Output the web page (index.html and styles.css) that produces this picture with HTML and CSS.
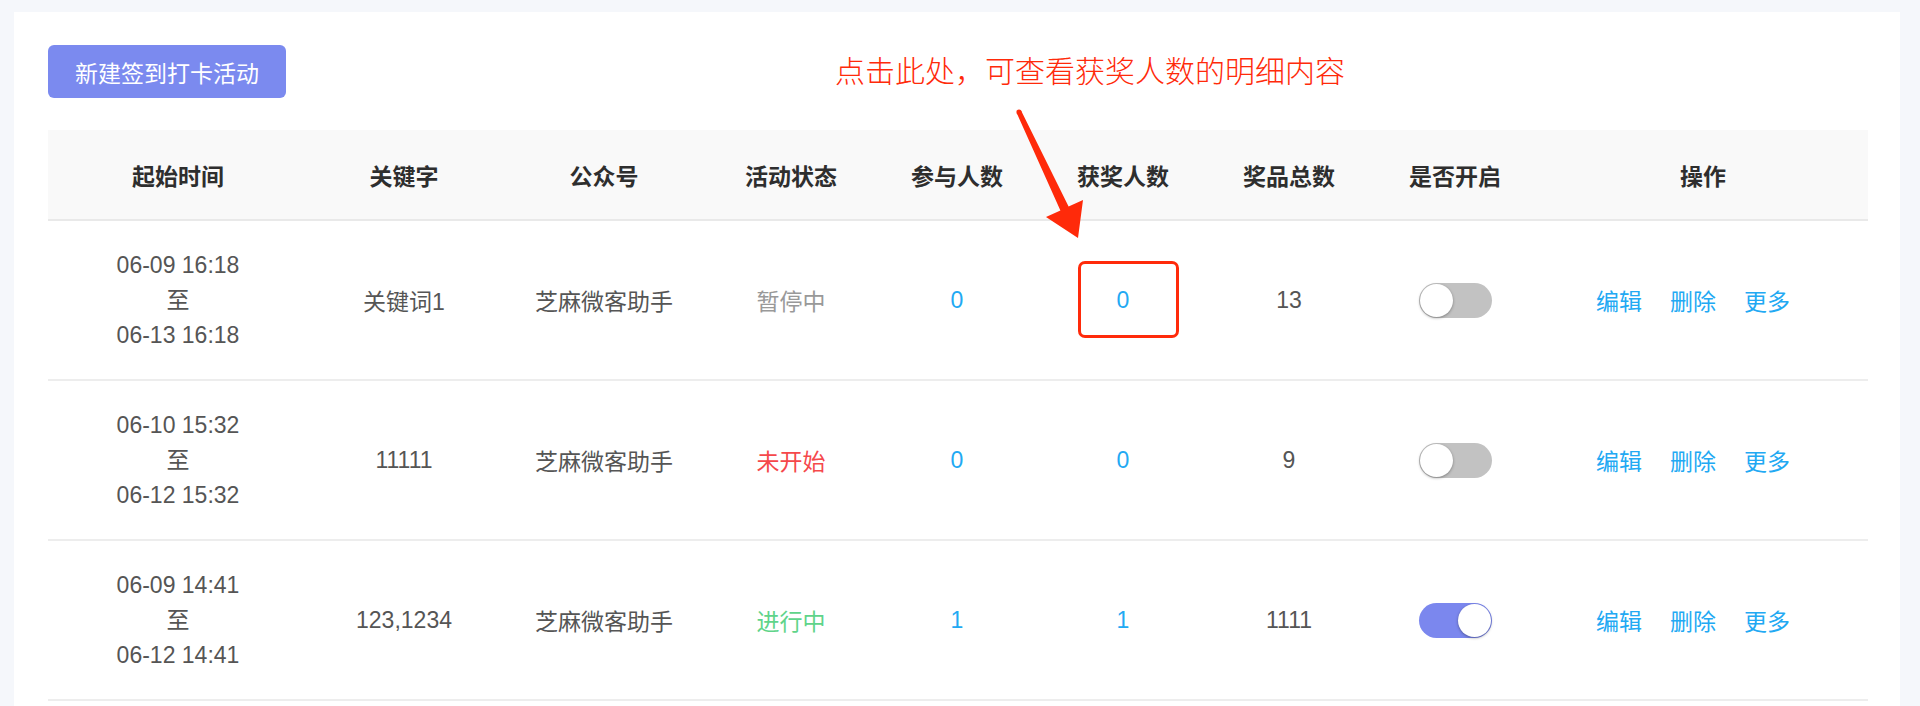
FILE: index.html
```html
<!DOCTYPE html>
<html lang="zh-CN">
	<head>
		<meta charset="UTF-8"/>
		<link rel="stylesheet" href="styles.css">
	</head>
	<body>
		<div class="page">
			<div class="card">
				<div class="toolbar">
					<button type="button" class="btn-new">新建签到打卡活动</button>
				</div>
				<table class="list">
					<colgroup>
						<col class="c-time"><col class="c-key"><col class="c-mp"><col class="c-mid">
						<col class="c-mid"><col class="c-mid"><col class="c-mid"><col class="c-mid"><col class="c-op">
					</colgroup>
					<thead>
						<tr>
							<th>起始时间</th><th>关键字</th><th>公众号</th><th>活动状态</th><th>参与人数</th>
							<th>获奖人数</th><th>奖品总数</th><th>是否开启</th><th>操作</th>
						</tr>
					</thead>
					<tbody>
						<tr>
							<td><div class="time">06-09 16:18<br>至<br>06-13 16:18</div></td>
							<td>关键词1</td>
							<td>芝麻微客助手</td>
							<td class="st-paused">暂停中</td>
							<td><a class="num">0</a></td>
							<td><a class="num">0</a></td>
							<td>13</td>
							<td><span class="switch"></span></td>
							<td><div class="ops"><a>编辑</a><a>删除</a><a>更多</a></div></td>
						</tr>
						<tr>
							<td><div class="time">06-10 15:32<br>至<br>06-12 15:32</div></td>
							<td>11111</td>
							<td>芝麻微客助手</td>
							<td class="st-pending">未开始</td>
							<td><a class="num">0</a></td>
							<td><a class="num">0</a></td>
							<td>9</td>
							<td><span class="switch"></span></td>
							<td><div class="ops"><a>编辑</a><a>删除</a><a>更多</a></div></td>
						</tr>
						<tr>
							<td><div class="time">06-09 14:41<br>至<br>06-12 14:41</div></td>
							<td>123,1234</td>
							<td>芝麻微客助手</td>
							<td class="st-running">进行中</td>
							<td><a class="num">1</a></td>
							<td><a class="num">1</a></td>
							<td>1111</td>
							<td><span class="switch on"></span></td>
							<td><div class="ops"><a>编辑</a><a>删除</a><a>更多</a></div></td>
						</tr>
					</tbody>
				</table>
			</div>

			<!-- markup drawn over the screenshot -->
			<div class="note">点击此处，可查看获奖人数的明细内容</div>
			<svg class="arrow" width="100" height="150" viewBox="0 0 100 150">
				<circle cx="19" cy="12" r="2.6" fill="#ff2a0a"/>
				<polygon fill="#ff2a0a" points="16.7,13.1 21.3,10.9 68.6,106.6 83,100 78,138 46,117 60.4,110.4"/>
			</svg>
			<div class="mark"></div>
		</div>
	</body>
</html>
```

FILE: styles.css
```css
html,body{
	margin:0;
	overflow:hidden;
}
body{
	background:#f5f7fb;
	font-family:"Liberation Sans","Noto Sans CJK SC",sans-serif;
	color:#555;
}
.page{
	position:relative;
	padding:12px 20px 0 14px;
}
.card{
	background:#fff;
	padding:33px 34px 40px;
}
.toolbar{
	height:53px;
	margin-bottom:32px;
}
.btn-new{
	height:53px;
	padding:0 27px;
	border:0;
	border-radius:6px;
	background:#7b8aef;
	color:#fff;
	font-size:23px;
	font-family:"Noto Sans CJK SC",sans-serif;
}
.list{
	width:100%;
	table-layout:fixed;
	border-collapse:collapse;
	font-size:23px;
	text-align:center;
}
.c-time{width:260px;}
.c-key{width:192px;}
.c-mp{width:208px;}
.c-mid{width:166px;}
.c-op{width:330px;}
.list th{
	height:89px;
	padding:0;
	background:#f9f9f9;
	color:#2e2e2e;
	font-weight:600;
	border-bottom:2px solid #e9e9e9;
}
.list td{
	height:158px;
	padding:0;
	border-bottom:2px solid #ededed;
}
.time{
	line-height:35px;
}
.num{
	color:#22a9f3;
}
.st-paused{color:#999;}
.st-pending{color:#f5484b;}
.st-running{color:#5fd48a;}
.switch{
	position:relative;
	display:inline-block;
	vertical-align:middle;
	width:73px;
	height:35px;
	border-radius:18px;
	background:#c2c2c2;
}
.switch::after{
	content:"";
	position:absolute;
	left:1px;
	top:1px;
	width:33px;
	height:33px;
	border-radius:50%;
	background:#fff;
	box-shadow:0 1px 3px rgba(0,0,0,.35);
}
.switch.on{
	background:#7b87ee;
}
.switch.on::after{
	left:39px;
}
.ops{
	display:flex;
	justify-content:center;
	gap:28px;
	padding-right:20px;
}
.ops a{
	color:#22a9f3;
}
.note{
	position:absolute;
	left:835px;
	top:49px;
	line-height:40px;
	font-size:30px;
	font-weight:300;
	color:#ff2a0a;
	font-family:"Noto Sans CJK SC",sans-serif;
}
.arrow{
	position:absolute;
	left:1000px;
	top:100px;
}
.mark{
	position:absolute;
	left:1078px;
	top:261px;
	width:101px;
	height:77px;
	box-sizing:border-box;
	border:3px solid #ff2a0a;
	border-radius:7px;
}
```
